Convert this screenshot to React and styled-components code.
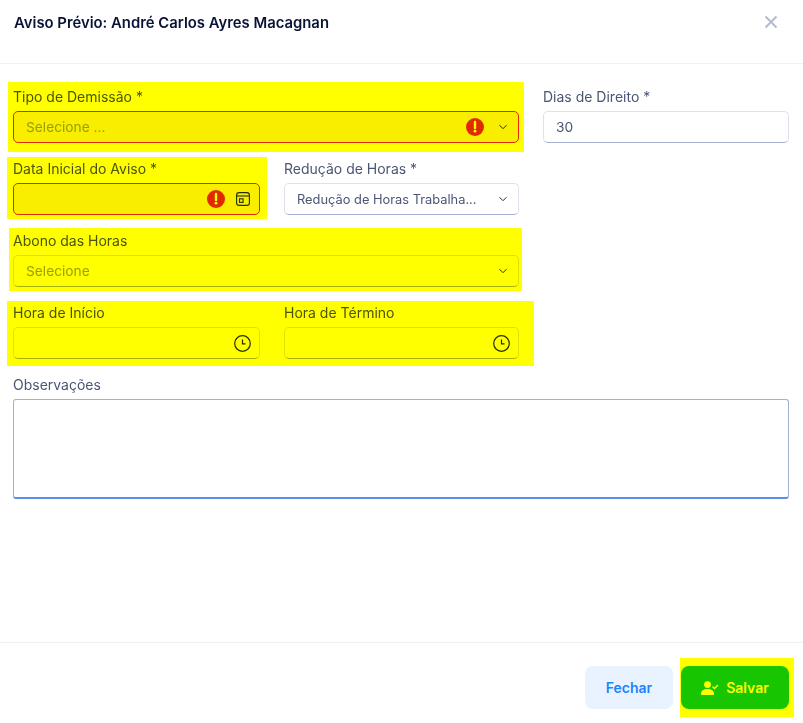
import React from "react";
import styled, { createGlobalStyle } from "styled-components";

const Global = createGlobalStyle`
  html, body { margin: 0; padding: 0; background: #fff; }
  * { box-sizing: border-box; }
  body { font-family: Inter, "Liberation Sans", sans-serif; }
`;

const Modal = styled.div`
  width: 803px;
  height: 723px;
  display: flex;
  flex-direction: column;
  background: #fff;
  overflow: hidden;
`;

const Header = styled.header`
  height: 64px;
  flex: none;
  display: flex;
  justify-content: space-between;
  padding: 14px 25px 0 14px;
  border-bottom: 1px solid #f1f1f4;
`;

const Title = styled.h3`
  margin: 0;
  font-size: 14.85px;
  line-height: 18px;
  font-weight: 600;
  color: #071437;
`;

const CloseButton = styled.button`
  width: 14px;
  height: 14px;
  margin-top: 1px;
  padding: 0;
  border: 0;
  background: none;
  display: flex;
`;

const Content = styled.main`
  flex: 1;
  display: flex;
  flex-direction: column;
  padding: 24px 14px 0 13px;
`;

const Row = styled.div`
  display: flex;
  gap: 24px;
  margin-bottom: 17px;
`;

const Field = styled.div`
  position: relative;
  width: ${(p) => p.$width}px;
  flex: none;

  ${(p) =>
    p.$mark &&
    `&::after {
      content: "";
      position: absolute;
      inset: ${p.$mark};
      background: #ffff00;
      mix-blend-mode: multiply;
      pointer-events: none;
    }`}
`;

const Label = styled.label`
  display: block;
  height: 17px;
  margin-bottom: 6px;
  font-size: 14px;
  line-height: 17px;
  color: #4b5675;
`;

const Control = styled.div`
  height: 32px;
  display: flex;
  align-items: center;
  padding: 0 10px 0 12px;
  border-radius: 5px;
  border: 1px solid ${(p) => (p.$error ? "#e8284a" : "#dfe2ee")};
  border-bottom-color: ${(p) => (p.$error ? "#e8284a" : "#a5b1d3")};
  background: ${(p) => (p.$error ? "#f9edf3" : "#fff")};
  color: #4b5675;
`;

const Value = styled.span`
  flex: 1;
  min-width: 0;
  white-space: nowrap;
  font-size: ${(p) => (p.$small ? "12.85px" : "13.75px")};
  color: ${(p) => (p.$placeholder ? "#99a1b7" : "#4b5675")};
`;

const Icons = styled.span`
  display: flex;
  align-items: center;
  gap: ${(p) => p.$gap}px;
  flex: none;
`;

const IconSlot = styled.span`
  display: flex;
  flex: none;
  margin-right: ${(p) => p.$shift}px;
`;

const TextArea = styled.div`
  height: 100px;
  width: 776px;
  border: 1px solid #a5b1d3;
  border-bottom: 2px solid #5b8def;
  border-radius: 3px;
`;

const Footer = styled.footer`
  height: 81px;
  flex: none;
  display: flex;
  justify-content: flex-end;
  gap: 8px;
  padding: 23px 14px 0 0;
  border-top: 1px solid #f1f1f4;
`;

const Button = styled.button`
  position: relative;
  width: ${(p) => p.$width}px;
  height: 43px;
  display: flex;
  align-items: center;
  justify-content: center;
  gap: 7px;
  border: 0;
  border-radius: 8px;
  font-family: inherit;
  font-size: 14px;
  font-weight: 600;
  background: ${(p) => (p.$primary ? "#17c653" : "#e9f3ff")};
  color: ${(p) => (p.$primary ? "#fff" : "#1b84ff")};

  ${(p) =>
    p.$primary &&
    `&::after {
      content: "";
      position: absolute;
      inset: -8px -5px -8px -1px;
      background: #ffff00;
      mix-blend-mode: multiply;
    }`}
`;

const CloseIcon = () => (
  <svg width="14" height="14" viewBox="0 0 14 14" fill="none" stroke="#b5bbcc" strokeWidth="2">
    <path d="M1.5 1.5l11 11M12.5 1.5l-11 11" />
  </svg>
);

const AlertIcon = () => (
  <svg width="18" height="18" viewBox="0 0 18 18">
    <circle cx="9" cy="9" r="9" fill="#e22a5a" />
    <path d="M9 4v6" stroke="#fff" strokeWidth="2.4" strokeLinecap="round" />
    <circle cx="9" cy="13.2" r="1.4" fill="#fff" />
  </svg>
);

const Chevron = () => (
  <svg width="10" height="6" viewBox="0 0 10 6" fill="none" stroke="#252f4a" strokeWidth="1">
    <path d="M1.5 1.2L5 4.7l3.5-3.5" />
  </svg>
);

const CalendarIcon = () => (
  <IconSlot $shift={-1}>
    <svg width="14" height="14" viewBox="0 0 14 14" fill="none" stroke="#252f4a" strokeWidth="1.1">
      <rect x="0.6" y="0.6" width="12.8" height="12.8" rx="2.5" />
      <path d="M0.6 4h12.8" />
      <rect x="3.5" y="6.8" width="3.6" height="3.6" />
    </svg>
  </IconSlot>
);

const ClockIcon = () => (
  <IconSlot $shift={-2}>
    <svg width="17" height="17" viewBox="0 0 17 17" fill="none" stroke="#252f4a" strokeWidth="1.2">
      <circle cx="8.5" cy="8.5" r="7.8" />
      <path d="M8.5 4.4v4.4h3" />
    </svg>
  </IconSlot>
);

const UserCheckIcon = () => (
  <svg width="18" height="14" viewBox="0 0 18 14" fill="#fff">
    <circle cx="6.5" cy="3.6" r="3.4" />
    <path d="M0 13c0-3.2 2.6-5 6.5-5s6.5 1.8 6.5 5c0 .6-.4 1-1 1H1c-.6 0-1-.4-1-1z" />
    <path d="M11.5 5.6l2 1.9 3.4-3.6" fill="none" stroke="#fff" strokeWidth="1.5" />
  </svg>
);

export default function App() {
  return (
    <Modal>
      <Global />
      <Header>
        <Title>Aviso Prévio: André Carlos Ayres Macagnan</Title>
        <CloseButton>
          <CloseIcon />
        </CloseButton>
      </Header>
      <Content>
        <Row>
          <Field $width={506} $mark="-6px -5px -9px -5px">
            <Label>Tipo de Demissão *</Label>
            <Control $error>
              <Value $placeholder>Selecione ...</Value>
              <Icons $gap={14}>
                <AlertIcon />
                <Chevron />
              </Icons>
            </Control>
          </Field>
          <Field $width={246}>
            <Label>Dias de Direito *</Label>
            <Control>
              <Value>30</Value>
            </Control>
          </Field>
        </Row>
        <Row>
          <Field $width={247} $mark="-3px -7px -4px -6px">
            <Label>Data Inicial do Aviso *</Label>
            <Control $error>
              <Value />
              <Icons $gap={11}>
                <AlertIcon />
                <CalendarIcon />
              </Icons>
            </Control>
          </Field>
          <Field $width={235}>
            <Label>Redução de Horas *</Label>
            <Control>
              <Value $small>Redução de Horas Trabalha...</Value>
              <Chevron />
            </Control>
          </Field>
        </Row>
        <Row>
          <Field $width={506} $mark="-4px -3px -4px -4px">
            <Label>Abono das Horas</Label>
            <Control>
              <Value $placeholder>Selecione</Value>
              <Chevron />
            </Control>
          </Field>
        </Row>
        <Row>
          <Field $width={247}>
            <Label>Hora de Início</Label>
            <Control>
              <Value />
              <ClockIcon />
            </Control>
          </Field>
          <Field $width={235} $mark="-3px -15px -7px -277px">
            <Label>Hora de Término</Label>
            <Control>
              <Value />
              <ClockIcon />
            </Control>
          </Field>
        </Row>
        <Label>Observações</Label>
        <TextArea />
      </Content>
      <Footer>
        <Button $width={88}>Fechar</Button>
        <Button $width={108} $primary>
          <UserCheckIcon />
          Salvar
        </Button>
      </Footer>
    </Modal>
  );
}
